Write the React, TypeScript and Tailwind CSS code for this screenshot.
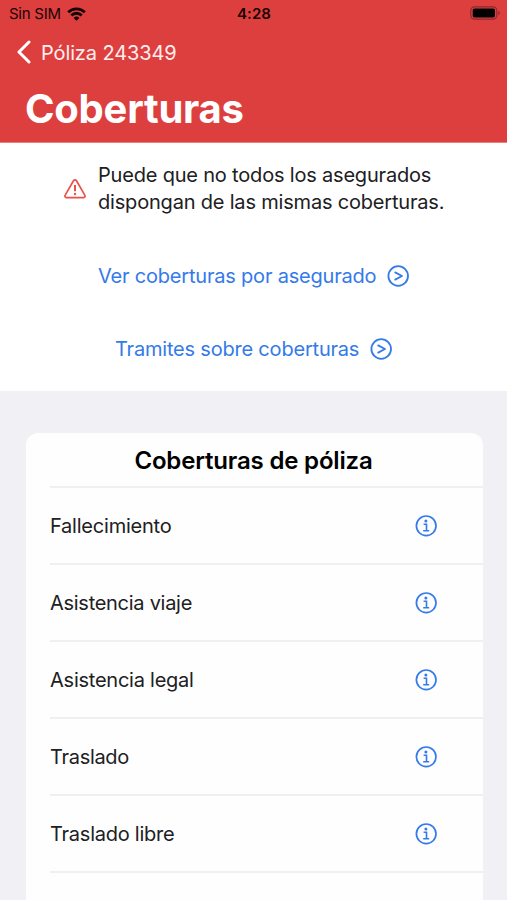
import React from "react";

const coverages = [
  { name: "Fallecimiento", tracking: "tracking-[-0.22px]" },
  { name: "Asistencia viaje", tracking: "tracking-[-0.28px]" },
  { name: "Asistencia legal", tracking: "tracking-[-0.24px]" },
  { name: "Traslado", tracking: "tracking-[-0.3px]" },
  { name: "Traslado libre", tracking: "tracking-[-0.24px]" },
];

function WifiIcon() {
  return (
    <svg className="-mt-px ml-[5px] h-[14px] w-[19px]" viewBox="0 0 19 14" fill="none" stroke="#180303" strokeWidth="2.8">
      <path d="M1.2 5.2a11.8 11.8 0 0 1 16.6 0" />
      <path d="M4.3 8.4a7.4 7.4 0 0 1 10.4 0" />
      <path d="M9.5 13.8 6.6 10.9a4.1 4.1 0 0 1 5.8 0z" fill="#180303" stroke="none" />
    </svg>
  );
}

function BatteryIcon() {
  return (
    <svg className="-mt-px h-[14px] w-[30px]" viewBox="0 0 30 14">
      <rect x="0.8" y="0.8" width="26" height="12.4" rx="3.6" fill="none" stroke="#8f2929" strokeWidth="1.2" />
      <rect x="2.7" y="2.5" width="22.3" height="9" rx="1.8" fill="#000" />
      <path d="M28.3 5v4.2c1-.3 1.5-1.1 1.5-2.1s-.5-1.8-1.5-2.1z" fill="#8f2929" />
    </svg>
  );
}

function WarningIcon() {
  return (
    <svg className="h-[20px] w-[22px] shrink-0" viewBox="0 0 22 20" fill="none" stroke="#ea5248" strokeWidth="1.7" strokeLinejoin="round">
      <path d="M9.5 1.8a1.7 1.7 0 0 1 3 0l8.3 14.3a1.7 1.7 0 0 1-1.5 2.6H2.7a1.7 1.7 0 0 1-1.5-2.6z" />
      <path d="M11 6v6.3" strokeWidth="2" />
      <circle cx="11" cy="15" r="1.2" fill="#ea5248" stroke="none" />
    </svg>
  );
}

function ChevronCircle() {
  return (
    <svg className="h-[22px] w-[22px] shrink-0" viewBox="0 0 22 22" fill="none" stroke="#347ae8" strokeWidth="1.8" strokeLinecap="round" strokeLinejoin="round">
      <circle cx="11.2" cy="11" r="9.8" />
      <path d="m8.2 7.4 6.8 3.6-6.8 3.6" />
    </svg>
  );
}

function InfoIcon() {
  return (
    <svg className="h-[22px] w-[22px] shrink-0" viewBox="0 0 22 22" fill="none" stroke="#347ae8" strokeWidth="1.7">
      <circle cx="11.2" cy="10.8" r="9.8" />
      <circle cx="10.9" cy="5.9" r="1.5" fill="#347ae8" stroke="none" />
      <path d="M8.6 9.3h2.9v6.3M8.2 15.8h6" strokeWidth="1.6" />
    </svg>
  );
}

export default function App() {
  return (
    <div className="flex h-[900px] w-[507px] flex-col overflow-hidden bg-[#f0f0f5] font-[Inter,'Liberation_Sans',sans-serif] text-[#202022]">
      <header className="h-[143px] shrink-0 border-b border-[#e88282] bg-[#dd3f3f]">
        <div className="grid h-[27px] grid-cols-3 items-center pr-[7px] pl-[9px] text-[#180303]">
          <div className="flex items-center pt-px text-[15px]">
            <span className="w-[53px] tracking-[-0.25px] whitespace-nowrap">Sin SIM</span>
            <WifiIcon />
          </div>
          <span className="pt-px pr-px text-center text-[15px] font-semibold tracking-[0.1px]">4:28</span>
          <div className="flex justify-end">
            <BatteryIcon />
          </div>
        </div>
        <div className="flex h-[50px] items-center pl-[17px] text-white">
          <svg className="h-[24px] w-[14px]" viewBox="0 0 14 24" fill="none" stroke="white" strokeWidth="3" strokeLinecap="round" strokeLinejoin="round">
            <path d="M12 2 2 12l10 10" />
          </svg>
          <span className="ml-[10px] pt-px text-[20px] tracking-[-0.12px] text-[#ffeeee]">Póliza 243349</span>
        </div>
        <h1 className="pl-[25px] text-[40px] leading-[64px] font-bold tracking-[-0.25px] text-white">Coberturas</h1>
      </header>
      <section className="h-[248px] shrink-0 bg-white">
        <div className="flex h-[92px] items-center pl-[64px]">
          <WarningIcon />
          <p className="ml-[12px] text-[20px] leading-[27px] whitespace-nowrap">
            <span className="tracking-[-0.19px]">Puede que no todos los asegurados</span>
            <br />
            <span className="tracking-[-0.19px]">dispongan de las mismas coberturas.</span>
          </p>
        </div>
        <a className="flex h-[81px] items-center pl-[98px] text-[20px] text-[#347ae8]">
          <span className="w-[289px] tracking-[-0.2px] whitespace-nowrap">Ver coberturas por asegurado</span>
          <ChevronCircle />
        </a>
        <a className="flex h-[66px] items-center pl-[115px] text-[20px] text-[#347ae8]">
          <span className="w-[255px] tracking-[-0.2px] whitespace-nowrap">Tramites sobre coberturas</span>
          <ChevronCircle />
        </a>
      </section>
      <main className="mt-[42px] mr-[24px] ml-[26px] h-[480px] shrink-0 rounded-t-[12px] bg-[#fefefe]">
        <h2 className="h-[53px] pr-[2px] text-center text-[24px] leading-[55px] font-semibold tracking-[-0.17px] text-black">Coberturas de póliza</h2>
        <ul className="ml-[24px] border-t-2 border-[#f0f0f1]">
          {coverages.map((item) => (
            <li key={item.name} className="flex h-[77px] items-center justify-between border-b-2 border-[#f0f0f1] pr-[46px] text-[20px]">
              <span className={item.tracking}>{item.name}</span>
              <InfoIcon />
            </li>
          ))}
        </ul>
      </main>
    </div>
  );
}
